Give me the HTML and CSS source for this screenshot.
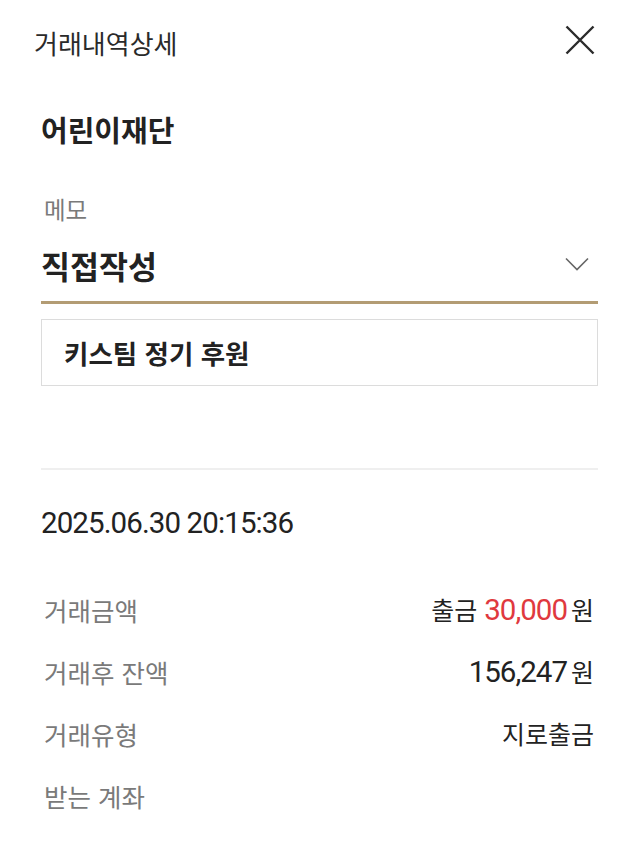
FILE: index.html
```html
<!DOCTYPE html>
<html lang="ko">
<head>
<meta charset="utf-8">
<title>거래내역상세</title>
<link rel="stylesheet" href="styles.css">
</head>
<body>
<div class="page">
  <header class="header">
    <h1 class="title">거래내역상세</h1>
    <button class="close" aria-label="닫기">
      <svg width="30" height="30" viewBox="0 0 30 30"><path d="M1.5 1.5 L28.5 28.5 M28.5 1.5 L1.5 28.5" stroke="#2b2b2b" stroke-width="2.4" fill="none"/></svg>
    </button>
  </header>
  <main class="content">
    <div class="org">어린이재단</div>
    <div class="memo-label">메모</div>
    <div class="select">
      <span class="select-value">직접작성</span>
      <svg class="chev" width="24" height="14" viewBox="0 0 24 14"><path d="M1 1.5 L12 12.5 L23 1.5" stroke="#666" stroke-width="1.6" fill="none"/></svg>
    </div>
    <div class="memo-box">키스팀 정기 후원</div>
    <hr class="divider">
    <div class="date">2025.06.30 20:15:36</div>
    <dl class="rows">
      <div class="row">
        <dt class="label">거래금액</dt>
        <dd class="value">출금 <span class="num red">30,000</span><span class="won">원</span></dd>
      </div>
      <div class="row">
        <dt class="label">거래후 잔액</dt>
        <dd class="value"><span class="num">156,247</span><span class="won">원</span></dd>
      </div>
      <div class="row">
        <dt class="label">거래유형</dt>
        <dd class="value">지로출금</dd>
      </div>
      <div class="row">
        <dt class="label">받는 계좌</dt>
        <dd class="value"></dd>
      </div>
    </dl>
  </main>
</div>
</body>
</html>
```
FILE: styles.css
```css
* { box-sizing: border-box; }
html, body { margin: 0; padding: 0; background: #fff; }
body {
  font-family: "Noto Sans CJK KR", "Noto Sans", sans-serif;
  color: #222;
}
.page { width: 640px; }
.header {
  height: 80px;
  display: flex;
  align-items: center;
  justify-content: space-between;
  padding: 0 45px 0 34px;
}
.title {
  margin: 6px 0 0;
  font-size: 26px;
  font-weight: 400;
  color: #2a2a2a;
  line-height: 32px;
}
.close {
  border: 0;
  background: none;
  padding: 0;
  width: 30px;
  height: 30px;
  display: flex;
}
.content {
  padding: 0 42px 0 41px;
  display: flex;
  flex-direction: column;
}
.org {
  margin-top: 29px;
  font-size: 29px;
  font-weight: 700;
  line-height: 40px;
  color: #222;
}
.memo-label {
  margin-top: 45px;
  font-size: 23.5px;
  line-height: 30px;
  color: #7a7a7a;
  padding-left: 3px;
}
.select {
  margin-top: 21px;
  display: flex;
  align-items: center;
  justify-content: space-between;
  padding: 0 9px 16px 0;
  border-bottom: 3px solid #b39c74;
}
.select-value {
  font-size: 31.5px;
  font-weight: 700;
  line-height: 40px;
  color: #222;
}
.chev { margin-top: -2px; }
.memo-box {
  margin-top: 15px;
  height: 67px;
  border: 1px solid #dcdcdc;
  display: flex;
  align-items: center;
  padding-left: 22px;
  font-size: 26.5px;
  font-weight: 700;
  color: #222;
}
.divider {
  margin: 82px 0 0;
  border: 0;
  height: 2px;
  background: #efefef;
}
.date {
  margin-top: 33px;
  font-family: Roboto, "Noto Sans CJK KR", sans-serif;
  font-size: 29.5px;
  letter-spacing: -0.9px;
  line-height: 40px;
  color: #222;
}
.rows {
  margin: 35px 0 0;
}
.row {
  height: 62px;
  display: flex;
  align-items: center;
  justify-content: space-between;
}
.label {
  font-size: 25.5px;
  color: #7a7a7a;
  padding-left: 3px;
}
.value {
  margin: 0;
  font-size: 25px;
  color: #222;
  padding-right: 4px;
  display: flex;
  align-items: baseline;
}
.num {
  font-family: Roboto, sans-serif;
  font-size: 29.5px;
  letter-spacing: -1px;
  margin-left: 7px;
}
.red { color: #e0393e; }
.won { margin-left: 4px; }
```
